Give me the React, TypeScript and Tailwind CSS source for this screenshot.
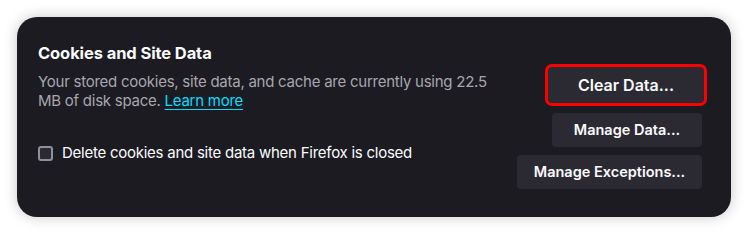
export default function App() {
  return (
    <div className="w-[748px] h-[234px] bg-white pt-[17px] pl-[17px]" style={{ fontFamily: 'Inter, "Noto Sans", sans-serif' }}>
      <div className="w-[714px] h-[200px] rounded-[20px] bg-[#1c1b22] shadow-[0_0_14px_rgba(0,0,0,0.22)] flex pl-[21px] pr-[29px]">
        <div className="flex-1 flex flex-col pt-[25px]">
          <h2 className="text-[16.5px] leading-[22px] font-bold tracking-[-0.1px] text-[#fbfbfe]">Cookies and Site Data</h2>
          <p className="mt-[8px] w-[460px] text-[15px] leading-[19px] tracking-[-0.25px] text-[#a7a6ae]">
            Your stored cookies, site data, and cache are currently using 22.5 MB of disk space.{' '}
            <a className="text-[#00ddff] underline underline-offset-[3px]">Learn more</a>
          </p>
          <label className="mt-[33px] flex items-center gap-[9px] text-[15px] leading-[20px] tracking-[-0.25px] text-[#fbfbfe]">
            <span className="w-[15px] h-[15px] rounded-[3px] border-2 border-[#8f8f9d] bg-[#2b2a33]" />
            Delete cookies and site data when Firefox is closed
          </label>
        </div>
        <div className="flex flex-col items-end pt-[47px]">
          <button className="w-[162px] h-[42px] -mr-[5px] rounded-[7px] border-[3px] border-[#ff0000] bg-[#2b2a33] text-[16px] font-semibold text-[#fbfbfe]">
            Clear Data...
          </button>
          <button className="mt-[7px] w-[150px] h-[34px] rounded-[4px] bg-[#2b2a33] text-[14.5px] font-semibold text-[#fbfbfe]">
            Manage Data...
          </button>
          <button className="mt-[8px] w-[185px] h-[34px] rounded-[4px] bg-[#2b2a33] text-[14.5px] font-semibold text-[#fbfbfe]">
            Manage Exceptions...
          </button>
        </div>
      </div>
    </div>
  );
}
